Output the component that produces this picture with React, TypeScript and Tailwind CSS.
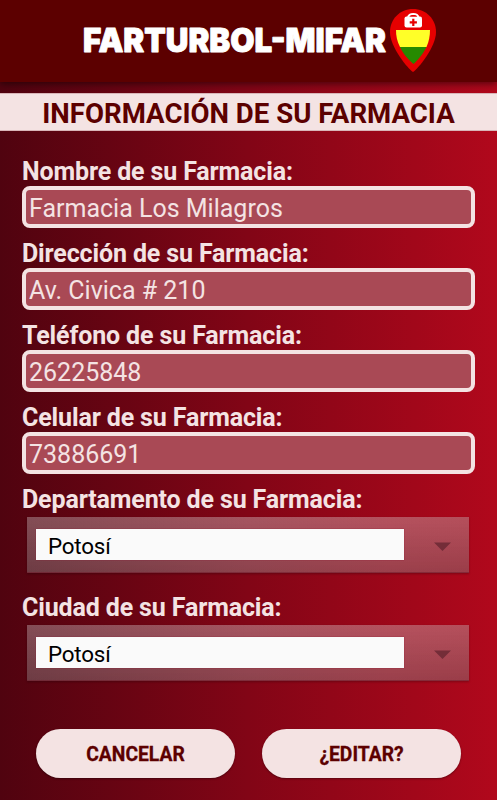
interface Field {
  label: string;
  value: string;
}

const fields: Field[] = [
  { label: "Nombre de su Farmacia:", value: "Farmacia Los Milagros" },
  { label: "Dirección de su Farmacia:", value: "Av. Civica # 210" },
  { label: "Teléfono de su Farmacia:", value: "26225848" },
  { label: "Celular de su Farmacia:", value: "73886691" },
];

const selects: Field[] = [
  { label: "Departamento de su Farmacia:", value: "Potosí" },
  { label: "Ciudad de su Farmacia:", value: "Potosí" },
];

function Logo() {
  return (
    <svg className="block" width="497" height="82" viewBox="0 0 497 82">
      <text
        x="83"
        y="52.3"
        textLength="303"
        lengthAdjust="spacingAndGlyphs"
        fill="#fff"
        stroke="#fff"
        strokeWidth="0.9"
        strokeLinejoin="round"
        fontFamily="Inter, sans-serif"
        fontWeight="900"
        fontSize="33"
      >
        FARTURBOL-MIFAR
      </text>

      {/* Map pin with the flag and the first aid kit */}
      <path
        d="M413 72C408 69 390 47 390 32C390 19 400 9 413 9S436 19 436 32C436 47 418 69 413 72Z"
        fill="#e60000"
      />
      <path d="M396 30H430C430 36 429 41 426.500 47H400C397 41 396 36 396 30Z" fill="#ffff28" />
      <path d="M400 47H426.500C423 54 417 61 413.500 64C409 60 403 54 400 47Z" fill="#268a00" />
      <path d="M408 18C408 12.500 418.500 12.500 418.500 18" fill="none" stroke="#fff" strokeWidth="2" />
      <rect x="404.500" y="16.500" width="17.500" height="11" rx="2" fill="#fff" />
      <path d="M410 16.500C411 14.500 416 14.500 417 16.500Z" fill="#e60000" />
      <path d="M413.300 18.800V26M409.700 22.400H416.900" stroke="#e60000" strokeWidth="2.200" />
    </svg>
  );
}

function Label({ text }: { text: string }) {
  return (
    <label className="h-[30px] text-[25px] leading-[32px] font-bold tracking-[-0.14px] whitespace-nowrap">
      {text}
    </label>
  );
}

function TextField({ label, value }: Field) {
  return (
    <div className="flex flex-col">
      <Label text={label} />
      <div className="h-[42px] rounded-[8px] border-4 border-[#f4e3e3] bg-[#a94955] pl-[3px] text-[25px] leading-[37px] whitespace-nowrap">
        {value}
      </div>
    </div>
  );
}

function SelectField({ label, value }: Field) {
  return (
    <div className="flex flex-col">
      <Label text={label} />
      <div className="mt-[3px] ml-[5px] mr-[6px] flex h-[56px] items-center border-b border-[#641322]/60 bg-[linear-gradient(to_bottom,#ffffff0d,#00000020),linear-gradient(to_right,#7d444d,#a14c58_50%,#b14956_82%,#b14653)] pl-[9px] shadow-[0_1px_2px_#00000040]">
        <div className="h-[31px] w-[368px] bg-[#fafafa] pl-[12px] text-[22.4px] leading-[34px] tracking-[-0.2px] text-black shadow-[0_0_1px_#8c1534]">
          {value}
        </div>
        <svg className="mt-[3px] ml-[30px]" width="17" height="9" viewBox="0 0 17 9">
          <path d="M0 0.500H17L8.500 9Z" fill="#742d38" />
        </svg>
      </div>
    </div>
  );
}

export default function App() {
  return (
    <div className="flex h-[800px] w-[497px] flex-col overflow-hidden bg-[linear-gradient(to_right,#50030f,#820516_50%,#b1081c)] font-[Roboto,sans-serif] text-[#f4e3e3]">
      <header className="h-[82px] shrink-0 bg-[#5c0000] shadow-[0_2px_7px_#00000080]">
        <Logo />
      </header>

      <h1 className="mt-[11px] h-[38px] shrink-0 border-y border-[#d9b5b8] bg-[#f4e3e3] text-center text-[27.6px] leading-[39px] font-bold whitespace-nowrap text-[#5c0000]">
        INFORMACIÓN DE SU FARMACIA
      </h1>

      <main className="mx-[22px] mt-[25px] flex flex-col gap-[10px]">
        {fields.map((field) => (
          <TextField key={field.label} {...field} />
        ))}
        <div className="flex flex-col gap-[19px]">
          {selects.map((field) => (
            <SelectField key={field.label} {...field} />
          ))}
        </div>
      </main>

      <footer className="mx-[36px] mt-[48px] flex justify-between text-[19.3px] font-bold text-[#5c0000] [-webkit-text-stroke:0.3px]">
        <button className="h-[49px] w-[199px] rounded-full bg-[#f4e3e3] pt-[3px] shadow-[0_1px_2px_#00000060]">CANCELAR</button>
        <button className="h-[49px] w-[199px] rounded-full bg-[#f4e3e3] pt-[3px] shadow-[0_1px_2px_#00000060]">¿EDITAR?</button>
      </footer>
    </div>
  );
}
